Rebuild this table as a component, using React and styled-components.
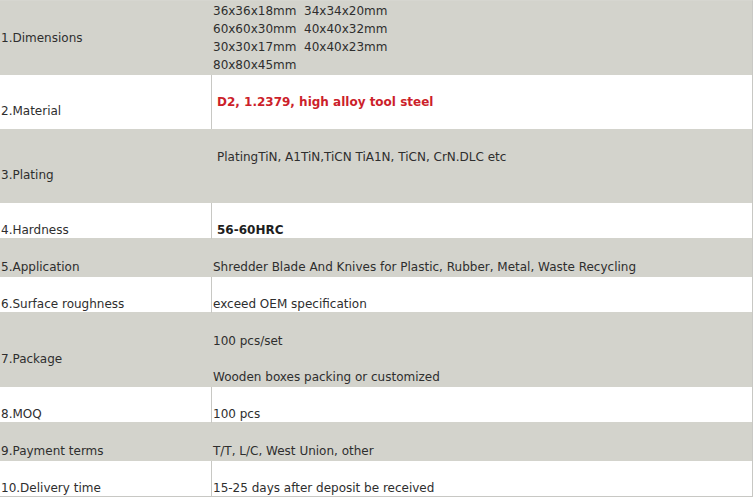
import React from 'react';
import styled, { createGlobalStyle } from 'styled-components';

const GlobalStyle = createGlobalStyle`
  html, body {
    margin: 0;
    padding: 0;
    background: #fff;
  }
  body {
    font-family: "DejaVu Sans", Verdana, sans-serif;
    font-size: 12px;
    color: #2e2e2e;
  }
`;

const Table = styled.div`
  width: 752px;
  border-top: 1px solid #d6d6d0;
  border-right: 1px solid #c8c8c4;
`;

const Row = styled.div`
  display: grid;
  grid-template-columns: 212px 1fr;
  height: ${p => p.$h}px;
  box-sizing: border-box;
  background: ${p => (p.$shade ? '#d3d3cc' : '#fff')};
  border-bottom: 1px solid #d3d3cc;
  &:last-child {
    border-bottom-color: #c8c8c4;
  }
`;

const Label = styled.div`
  padding: ${p => p.$top + 1}px 0 0 1px;
  line-height: 18px;
  white-space: nowrap;
  border-right: 1px solid ${p => (p.$shade ? '#d3d3cc' : '#c8c8c4')};
`;

const Value = styled.div`
  padding: ${p => p.$top + 1}px 0 0 ${p => (p.$left || 0) + 1}px;
  line-height: 18px;
  white-space: pre;
`;

const Strong = styled.span`
  font-weight: bold;
  color: ${p => p.$color || '#1e1e1e'};
`;

const rows = [
  { label: '1.Dimensions', h: 74, lt: 27, rt: 0, value: '36x36x18mm  34x34x20mm\n60x60x30mm  40x40x32mm\n30x30x17mm  40x40x23mm\n80x80x45mm' },
  { label: '2.Material', h: 55, lt: 26, rt: 17, left: 4, value: <Strong $color="#cc1f2b">D2, 1.2379, high alloy tool steel</Strong> },
  { label: '3.Plating', h: 73, lt: 35, rt: 17, left: 4, value: 'PlatingTiN, A1TiN,TiCN TiA1N, TiCN, CrN.DLC etc' },
  { label: '4.Hardness', h: 36, lt: 17, rt: 17, left: 4, value: <Strong>56-60HRC</Strong> },
  { label: '5.Application', h: 38, lt: 18, rt: 18, value: 'Shredder Blade And Knives for Plastic, Rubber, Metal, Waste Recycling' },
  { label: '6.Surface roughness', h: 36, lt: 17, rt: 17, value: 'exceed OEM specification' },
  { label: '7.Package', h: 74, lt: 36, rt: 18, value: '100 pcs/set\n\nWooden boxes packing or customized' },
  { label: '8.MOQ', h: 36, lt: 17, rt: 17, value: '100 pcs' },
  { label: '9.Payment terms', h: 38, lt: 18, rt: 18, value: 'T/T, L/C, West Union, other' },
  { label: '10.Delivery time', h: 36, lt: 17, rt: 17, value: '15-25 days after deposit be received' },
];

export default function App() {
  return (
    <>
      <GlobalStyle />
      <Table>
        {rows.map((r, i) => {
          const shade = i % 2 === 0;
          return (
            <Row key={r.label} $h={r.h} $shade={shade}>
              <Label $top={r.lt} $shade={shade}>{r.label}</Label>
              <Value $top={r.rt} $left={r.left}>{r.value}</Value>
            </Row>
          );
        })}
      </Table>
    </>
  );
}
